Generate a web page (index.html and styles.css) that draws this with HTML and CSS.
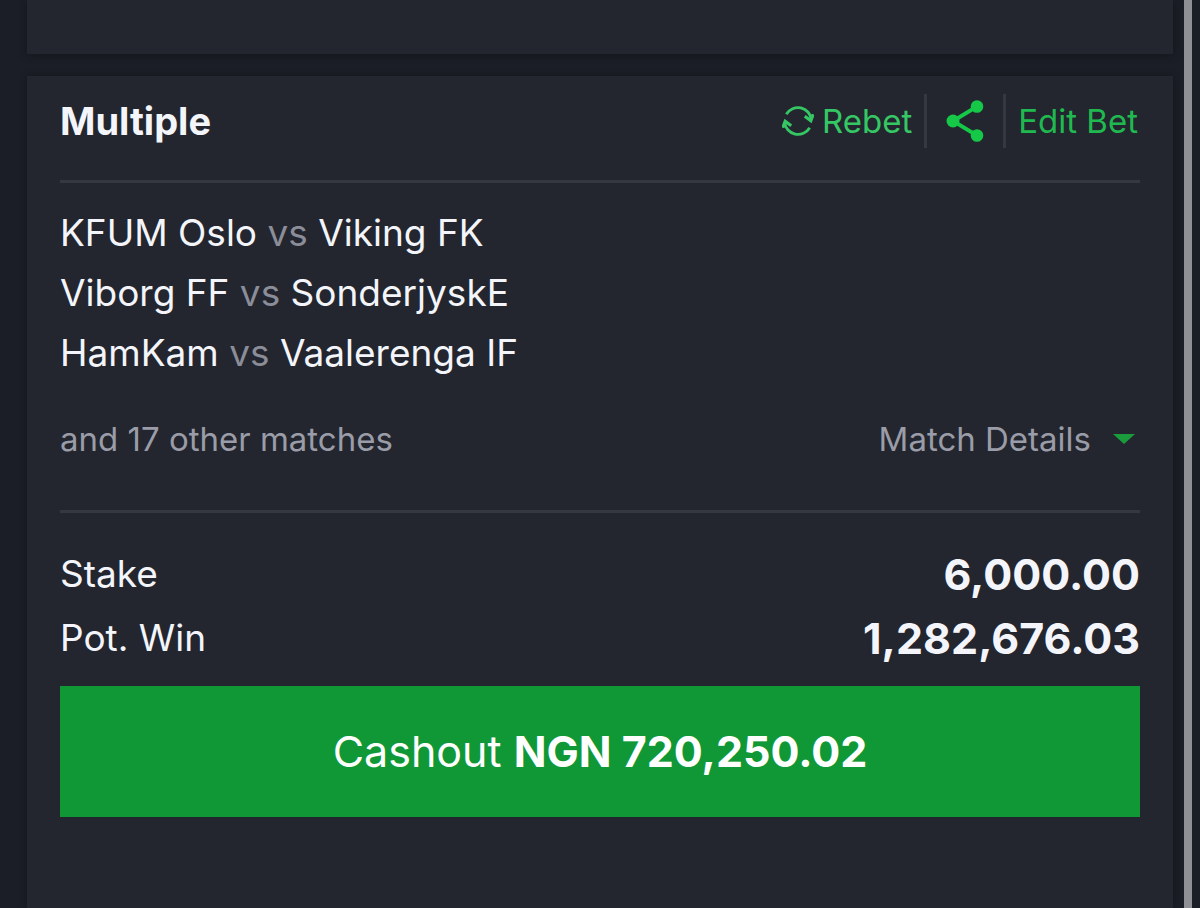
FILE: index.html
```html
<!DOCTYPE html>
<html lang="en">
<head>
    <meta charset="UTF-8">
    <meta name="viewport" content="width=device-width, initial-scale=1.0">
    <title>Open Bets</title>
    <link rel="stylesheet" href="styles.css">
</head>
<body>
    <main class="bets">
        <div class="card card-previous"></div>

        <section class="card card-bet">
            <header class="bet-header">
                <h1>Multiple</h1>
                <div class="actions">
                    <button type="button" class="action rebet">
                        <svg width="32" height="32" viewBox="0 0 32 32" fill="none" stroke="currentColor" stroke-width="2.800" aria-hidden="true">
                            <path d="M4.300 9.300A13.500 13.500 0 0 1 29.400 15"/>
                            <path d="M22.800 11.300L28.800 15.800L31.200 9.300" stroke-width="3.200"/>
                            <path d="M27.700 22.700A13.500 13.500 0 0 1 2.600 17"/>
                            <path d="M.8 22.700L3.200 16.200L9.200 20.700" stroke-width="3.200"/>
                        </svg>
                        Rebet
                    </button>
                    <button type="button" class="action share" aria-label="Share">
                        <svg width="38" height="42" viewBox="0 0 38 42" fill="currentColor" aria-hidden="true">
                            <path d="M31 6.500L7 21L31 35.500" fill="none" stroke="currentColor" stroke-width="3.800"/>
                            <circle cx="31" cy="6.500" r="6.300"/>
                            <circle cx="7" cy="21" r="6.500"/>
                            <circle cx="31" cy="35.500" r="6.300"/>
                        </svg>
                    </button>
                    <button type="button" class="action">Edit Bet</button>
                </div>
            </header>

            <div class="matches">
                <ul>
                    <li>KFUM Oslo <span>vs</span> Viking FK</li>
                    <li>Viborg FF <span>vs</span> SonderjyskE</li>
                    <li>HamKam <span>vs</span> Vaalerenga IF</li>
                </ul>
                <div class="more">
                    <p>and 17 other matches</p>
                    <button type="button" class="details">
                        Match Details
                        <svg width="22" height="10" viewBox="0 0 22 10" aria-hidden="true">
                            <path d="M0 0H22L11 10Z" fill="#1a9c3d"/>
                        </svg>
                    </button>
                </div>
            </div>

            <dl class="summary">
                <div>
                    <dt>Stake</dt>
                    <dd>6,000.00</dd>
                </div>
                <div>
                    <dt>Pot. Win</dt>
                    <dd>1,282,676.03</dd>
                </div>
            </dl>

            <button type="button" class="cashout">Cashout <b>NGN 720,250.02</b></button>
        </section>
    </main>
    <div class="scroll-thumb"></div>
</body>
</html>
```
FILE: styles.css
```css
* {
    margin: 0;
    padding: 0;
    box-sizing: border-box;
}

body {
    font-family: Inter, "Liberation Sans", sans-serif;
    background-color: #1b1e26;
    color: #f3f5fa;
}

button {
    border: none;
    background: none;
    font: inherit;
    color: inherit;
    cursor: pointer;
}

.bets {
    display: flex;
    flex-direction: column;
    gap: 22px;
    min-height: 100vh;
    padding: 0 27px;
}

.card {
    background-color: #23262f;
    box-shadow: 0 1px 8px rgba(0, 0, 0, 0.3);
}

.card-previous {
    height: 54px;
}

.card-bet {
    flex: 1;
    padding: 0 33px 33px;
}

/* Header */
.bet-header {
    display: flex;
    justify-content: space-between;
    align-items: center;
    padding: 18px 0 32px;
    border-bottom: 3px solid #353841;
}

h1 {
    font-size: 38px;
    font-weight: 700;
    line-height: 54px;
}

.actions {
    display: flex;
}

.action {
    display: flex;
    align-items: center;
    gap: 8px;
    height: 54px;
    padding: 0 12px;
    font-size: 33px;
    color: #20b950;
}

.action + .action {
    border-left: 3px solid #353841;
}

.action:last-child {
    padding-right: 2px;
}

.rebet {
    color: #36c765;
}

.share {
    padding: 0 19px;
    color: #15c847;
}

/* Matches */
.matches {
    padding: 20px 0 41px;
    border-bottom: 3px solid #353841;
}

.matches ul {
    list-style: none;
    font-size: 37px;
    line-height: 60px;
}

.matches span {
    color: #8b8d98;
}

.more {
    display: flex;
    justify-content: space-between;
    margin-top: 26px;
    font-size: 33px;
    line-height: 60px;
    color: #9a9ca7;
}

.details {
    display: flex;
    align-items: center;
    gap: 22px;
    padding-right: 5px;
}

/* Stake and winnings */
.summary {
    padding: 29px 0 16px;
}

.summary div {
    display: flex;
    justify-content: space-between;
    line-height: 64px;
}

.summary dt {
    font-size: 37px;
}

.summary dd {
    font-size: 43px;
    font-weight: 700;
}

.cashout {
    width: 100%;
    padding: 35px 0 36px;
    background-color: #109837;
    color: #fff;
    font-size: 43px;
    line-height: 60px;
}

.cashout b {
    font-weight: 700;
}

.scroll-thumb {
    position: fixed;
    top: 0;
    right: 8px;
    bottom: 0;
    width: 8px;
    background-color: #8f9095;
}
```
